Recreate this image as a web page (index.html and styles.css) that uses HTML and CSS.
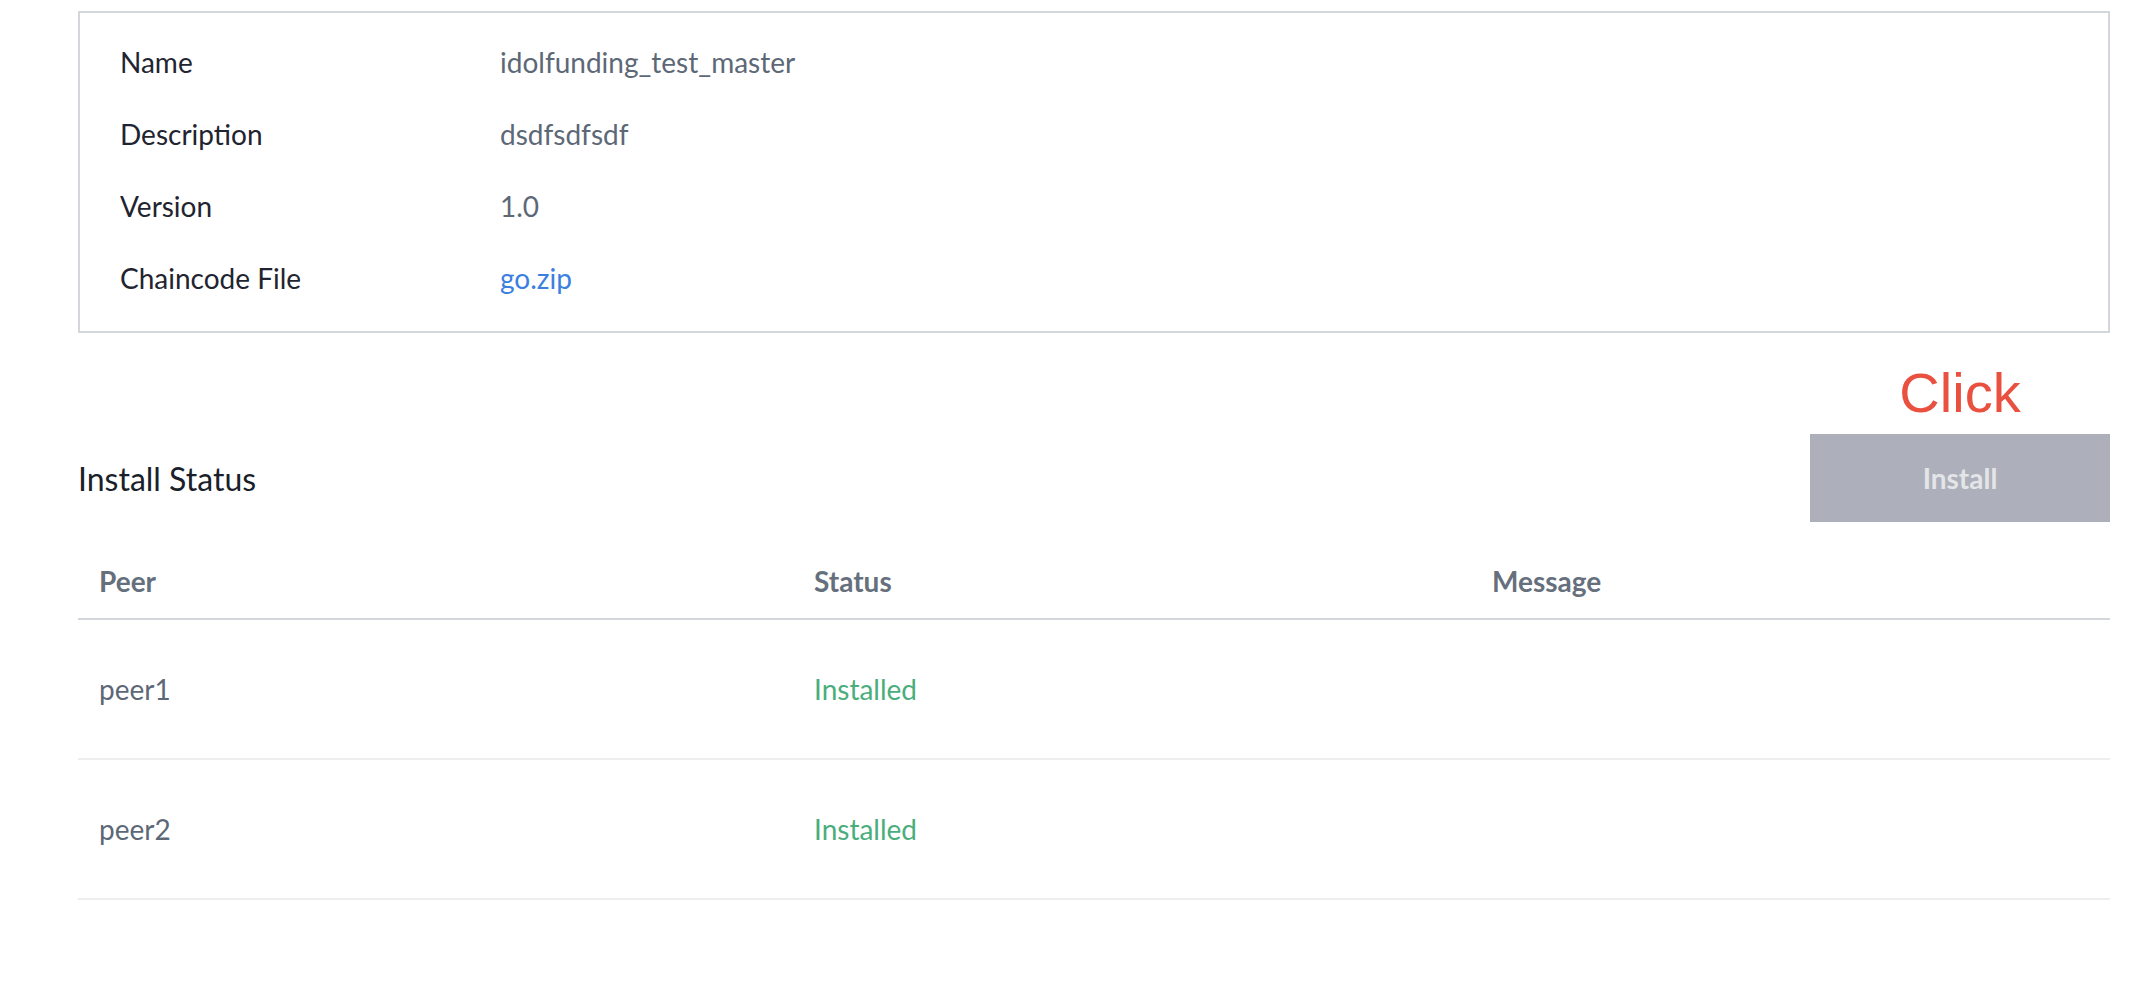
FILE: index.html
```html
<!DOCTYPE html>
<html lang="en">
<head>
  <meta charset="UTF-8">
  <meta name="viewport" content="width=device-width, initial-scale=1.0">
  <title>Chaincode Install</title>
  <link rel="stylesheet" href="styles.css">
</head>
<body>
  <div class="page">
    <div class="info-box">
      <div class="info-row">
        <span class="info-label">Name</span>
        <span class="info-value">idolfunding_test_master</span>
      </div>
      <div class="info-row">
        <span class="info-label">Description</span>
        <span class="info-value">dsdfsdfsdf</span>
      </div>
      <div class="info-row">
        <span class="info-label">Version</span>
        <span class="info-value">1.0</span>
      </div>
      <div class="info-row">
        <span class="info-label">Chaincode File</span>
        <a class="info-value info-link" href="#">go.zip</a>
      </div>
    </div>

    <div class="status-head">
      <h2 class="status-title">Install Status</h2>
      <div class="actions">
        <span class="click-note">Click</span>
        <button class="install-btn" disabled>Install</button>
      </div>
    </div>

    <table class="status-table">
      <thead>
        <tr>
          <th class="col-peer">Peer</th>
          <th class="col-status">Status</th>
          <th>Message</th>
        </tr>
      </thead>
      <tbody>
        <tr>
          <td>peer1</td>
          <td class="installed">Installed</td>
          <td></td>
        </tr>
        <tr>
          <td>peer2</td>
          <td class="installed">Installed</td>
          <td></td>
        </tr>
      </tbody>
    </table>
  </div>
</body>
</html>
```

FILE: styles.css
```css
body {
  margin: 0;
  font-family: Lato, "Open Sans", sans-serif;
  background: #fff;
  color: #1f2430;
}
.page {
  width: 2032px;
  margin-left: 78px;
  padding-top: 11px;
}
.info-box {
  border: 2px solid #d3d6da;
  padding: 13px 0 17px 40px;
}
.info-row {
  display: flex;
  align-items: center;
  height: 72px;
  font-size: 28px;
}
.info-label {
  width: 380px;
  color: #1f2430;
}
.info-value {
  color: #5d6877;
}
.info-link {
  color: #3b7fe0;
  text-decoration: none;
}
.status-head {
  display: flex;
  justify-content: space-between;
  align-items: flex-end;
  margin-top: 28px;
}
.status-title {
  margin: 0;
  font-size: 32px;
  font-weight: normal;
  line-height: 86px;
  color: #1a1f2b;
}
.actions {
  display: flex;
  flex-direction: column;
  align-items: center;
  width: 300px;
}
.click-note {
  font-family: "Liberation Sans", Arial, sans-serif;
  font-size: 56px;
  line-height: 64px;
  color: #e9503f;
  margin-bottom: 9px;
}
.install-btn {
  width: 300px;
  height: 88px;
  border: none;
  background: #adb0ba;
  color: #e4e5e8;
  font-family: Lato, sans-serif;
  font-size: 28px;
  font-weight: bold;
}
.status-table {
  width: 100%;
  border-collapse: collapse;
  margin-top: 22px;
  font-size: 28px;
}
.status-table th {
  text-align: left;
  font-weight: bold;
  color: #66707d;
  line-height: 36px;
  padding: 19px 21px;
  border-bottom: 2px solid #d3d6da;
}
.col-peer {
  width: 673px;
}
.col-status {
  width: 636px;
}
.status-table td {
  line-height: 36px;
  padding: 51px 21px;
  color: #5d6877;
  border-bottom: 2px solid #eeeeee;
}
.status-table td.installed {
  color: #4aae7c;
}
```
